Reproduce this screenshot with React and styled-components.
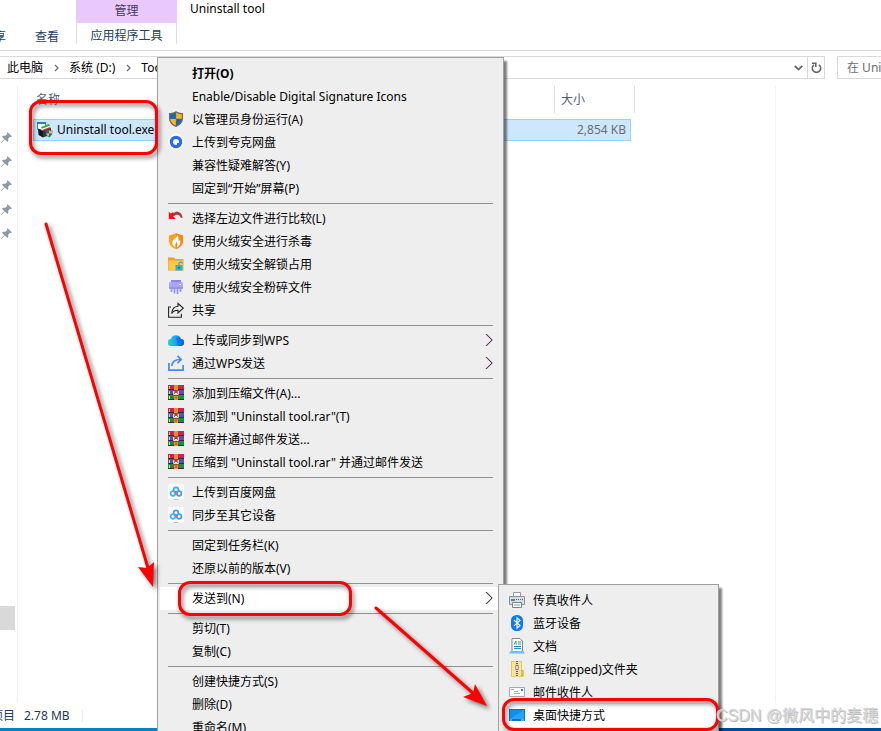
import React from "react";
import styled, { createGlobalStyle, css } from "styled-components";

const GlobalStyle = createGlobalStyle`
  * { box-sizing: border-box; }
  body {
    margin: 0;
    background: #fff;
    overflow: hidden;
  }
  body, button, input, table {
    font-family: "Noto Sans", "Noto Sans CJK SC", sans-serif;
    font-size: 12px;
    line-height: 16px;
    color: #000;
  }
`;

/* ---------- explorer window ---------- */

const Desktop = styled.div`
  position: relative;
  height: 100vh;
  overflow: hidden;
  display: flex;
  flex-direction: column;
`;

const Ribbon = styled.header`
  display: flex;
  flex: none;
  height: 51px;
  border-bottom: 1px solid #dadbdc;
`;

const RibbonTab = styled.button`
  align-self: flex-end;
  height: 26px;
  margin: 0 17px 0 0;
  padding: 0;
  border: 0;
  background: none;
  white-space: nowrap;
  color: #24405f;
`;

const HomeTabs = styled.div`
  display: flex;
  justify-content: flex-end;
  width: 76px;
  overflow: hidden;
  button:first-child { margin-right: 29px; }
`;

const ToolTab = styled.div`
  display: flex;
  flex-direction: column;
  width: 101px;
  height: 44px;
  text-align: center;
`;

const ToolTitle = styled.div`
  height: 24px;
  padding-top: 3px;
  background: #e9c9fd;
  color: #4a3a55;
`;

const ToolButton = styled.button`
  flex: 1;
  padding: 5px 0 0;
  border: 1px solid #dedede;
  border-width: 0 1px;
  background: #fff;
  color: #24405f;
  white-space: nowrap;
`;

const WindowTitle = styled.h1`
  margin: 0;
  padding: 1px 13px;
  font-size: 12px;
  font-weight: 400;
`;

const AddressRow = styled.div`
  display: flex;
  flex: none;
  gap: 12px;
  padding: 5px 0 7px;
`;

const AddressBar = styled.nav`
  display: flex;
  flex: 1;
  align-items: center;
  height: 23px;
  padding-left: 7px;
  border: 1px solid #d9d9d9;
  border-left: 0;
`;

const Crumb = styled.a`
  color: #000;
  text-decoration: none;
  white-space: nowrap;
`;

const CrumbArrow = styled.svg`
  flex: none;
  width: 5px;
  height: 8px;
  margin: 0 10px 0 11px;
`;

const BarButton = styled.button`
  display: flex;
  align-items: center;
  justify-content: center;
  width: 17px;
  height: 21px;
  padding: 0;
  border: 0;
  border-left: ${(p) => (p.$divider ? "1px solid #d9d9d9" : "0")};
  margin-left: ${(p) => (p.$push ? "auto" : "0")};
  background: none;
`;

const Search = styled.input`
  flex: none;
  width: 44px;
  height: 23px;
  padding: 0 0 0 9px;
  border: 1px solid #d9d9d9;
  border-right: 0;
  border-radius: 0;
  outline: 0;
  &::placeholder { color: #6d6d6d; opacity: 1; }
`;

const Content = styled.div`
  display: flex;
  flex: 1;
  min-height: 0;
`;

const NavPane = styled.aside`
  display: flex;
  flex-direction: column;
  width: 18px;
  padding: 40px 0 73px;
  border-right: 1px solid #f0f0f0;
`;

const PinSlot = styled.div`
  display: flex;
  align-items: center;
  height: 24px;
  padding: 0 0 1px 1px;
`;

const ScrollThumb = styled.div`
  width: 15px;
  height: 24px;
  margin-top: auto;
  background: #d9d9d9;
`;

const FilePane = styled.main`
  flex: 1;
  padding-left: 15px;
`;

const PreviewPane = styled.aside`
  width: 106px;
  border-left: 1px solid #f3f3f3;
`;

const FileTable = styled.table`
  border-collapse: separate;
  border-spacing: 0;
  table-layout: fixed;
  width: 602px;
  th, td { padding: 0; font-weight: 400; text-align: left; }
  th { padding-bottom: 6px; color: #4c607a; }
  col:nth-child(1) { width: 522px; }
  col:nth-child(2) { width: 76px; }
`;

const HeadCell = styled.div`
  height: 27px;
  padding: 6px 0 0 ${(p) => p.$indent || 0}px;
  border-right: ${(p) => (p.$line ? "1px solid #e0e0e0" : "0")};
`;

const fileCell = css`
  height: 22px;
  background: #cce8ff;
  border: 1px solid #99d1ff;
`;

const NameCell = styled.td`
  ${fileCell}
  border-right: 0;
  div { display: flex; align-items: center; gap: 4px; padding-left: 3px; }
`;

const SizeCell = styled.td`
  ${fileCell}
  border-left: 0;
  div { padding-right: 4px; text-align: right; color: #6d6d6d; }
`;

const StatusBar = styled.footer`
  display: flex;
  flex: none;
  align-items: center;
  gap: 9px;
  height: 25px;
  color: #1e395b;
  white-space: nowrap;
`;

const StatusCount = styled.span`
  display: flex;
  justify-content: flex-end;
  width: 15px;
  overflow: hidden;
`;

const StatusSize = styled.span`
  padding-right: 12px;
  border-right: 1px solid #ececec;
  line-height: 12px;
`;

const Taskbar = styled.div`
  flex: none;
  height: 3px;
  background: linear-gradient(90deg, #0085c3 20%, #004a9c 80%);
`;

/* ---------- context menus ---------- */

const Menu = styled.div`
  position: absolute;
  left: ${(p) => p.$x}px;
  top: ${(p) => p.$y}px;
  width: ${(p) => p.$w}px;
  padding: 4px 2px;
  background: #eee;
  border: 1px solid #a0a0a0;
  box-shadow: 3px 4px 2px rgba(0, 0, 0, 0.5);
`;

const MenuItem = styled.button`
  display: grid;
  grid-template-columns: 16px 1fr auto;
  align-items: center;
  gap: 8px;
  width: 100%;
  height: 23px;
  padding: 0 8px;
  border: 0;
  background: ${(p) => (p.$active ? "#fff" : "transparent")};
  font-weight: ${(p) => (p.$bold ? 700 : 400)};
  text-align: left;
  white-space: nowrap;
  svg { margin-bottom: 1px; }
`;

const Separator = styled.hr`
  height: 1px;
  margin: 3px 8px;
  border: 0;
  background: #919191;
`;

const Icon16 = styled.svg`
  display: block;
  flex: none;
  width: 16px;
  height: 16px;
`;

/* ---------- marks over the windows ---------- */

const RedBox = styled.div`
  position: absolute;
  left: ${(p) => p.$x}px;
  top: ${(p) => p.$y}px;
  width: ${(p) => p.$w}px;
  height: ${(p) => p.$h}px;
  border: 3px solid #f00;
  border-radius: 12px;
  filter: drop-shadow(2px 3px 2px rgba(0, 0, 0, 0.5));
  pointer-events: none;
`;

const Arrows = styled.svg`
  position: absolute;
  left: 0;
  top: 0;
  filter: drop-shadow(3px 3px 2px rgba(0, 0, 0, 0.5));
  pointer-events: none;
`;

const Watermark = styled.div`
  position: absolute;
  right: 3px;
  bottom: 3px;
  font-family: "Liberation Sans", "Noto Sans CJK SC", sans-serif;
  font-size: 16px;
  line-height: 24px;
  color: #d6d6d6;
  text-shadow: 1px 1px 0 #bdbdbd;
  white-space: nowrap;
`;

/* ---------- icons ---------- */

function Shield() {
  return (
    <Icon16 viewBox="0 0 16 16">
      <path d="M8 0C6 1.500 4 2 1 2V7c0 4.500 2.500 7 7 9 4.500-2 7-4.500 7-9V2C12 2 10 1.500 8 0z" fill="#6b6b62" />
      <path d="M7.800 1.500C6 2.700 4.500 3.200 2.200 3.300v4.400h5.600z" fill="#1369bd" />
      <path d="M8.200 1.500c1.500 1.200 3 1.700 5.600 1.800v4.400H8.200z" fill="#fdb913" />
      <path d="M2.200 8h5.600v6.500C4.500 13 2.500 11 2.200 8z" fill="#fdb913" />
      <path d="M8.200 8h5.600c-.3 3-2.300 5-5.600 6.500z" fill="#1369bd" />
    </Icon16>
  );
}

function Quark() {
  return (
    <Icon16 viewBox="0 0 16 16">
      <circle cx="8" cy="8" r="8" fill="#fff" />
      <circle cx="8" cy="8" r="6.200" fill="#2567ff" />
      <circle cx="8" cy="8" r="3" fill="#fff" />
      <path d="M9 9h2.500v2H9z" fill="#2567ff" />
    </Icon16>
  );
}

function RedUndo() {
  return (
    <Icon16 viewBox="0 0 16 16">
      <path d="M5 3.500C9 0 14 2 14.500 8l-1.700-.3C11.500 4 8.500 4 6 6z" fill="#a63a3a" />
      <path d="M.8 1.800L3 3.500l2-1.300 2 2.300-1.800 2L8 9H.8z" fill="#f01414" />
    </Icon16>
  );
}

function FireShield() {
  return (
    <Icon16 viewBox="0 0 16 16">
      <path d="M8 0C6 1.500 3.500 2 1 2.200V8c0 4 3 6.500 7 8 4-1.500 7-4 7-8V2.200C12.500 2 10 1.500 8 0z" fill="#ffa21a" />
      <path d="M8 0v16c4-1.500 7-4 7-8V2.200C12.500 2 10 1.500 8 0z" fill="#f88a12" />
      <path d="M9 2c.5 2.500-3.500 4-4.500 6.500C3.800 11 5 13 7.500 14.500c-1-2-.3-3.500 1.300-6 .2 2 .8 4 0 6 3-1.500 4.200-4 3.200-8-.4 1-.8 1.400-1.500 1.500C10.700 6 10.500 3.500 9 2z" fill="#fff" />
    </Icon16>
  );
}

function UnlockFolder() {
  return (
    <Icon16 viewBox="0 0 16 16">
      <path d="M0 1.500h6l1.500 1.500H15.500V14.500H0z" fill="#e9a425" />
      <path d="M.5 4.500h14.500v9.500H.5z" fill="#ffc845" />
      <path d="M11 9V7.500c0-1.800 3.500-1.800 3.500 0" fill="none" stroke="#27a9dc" strokeWidth="1.200" />
      <rect x="7.500" y="9" width="7" height="5.500" fill="#2daee0" />
      <path d="M10 11h2v1.500h-2z" fill="#146e9c" />
    </Icon16>
  );
}

function Shredder() {
  return (
    <Icon16 viewBox="0 0 16 16">
      <path d="M3 1h10v4H3z" fill="#8d87ea" />
      <rect x="1" y="3" width="14" height="7" rx="1.500" fill="#aaa5f8" />
      <path d="M3.500 10v3M6.500 10v4.500M9.500 10v5M12.500 10v3" stroke="#9a94f0" strokeWidth="1.800" />
      <path d="M1 9h14" stroke="#8780e5" />
      <path d="M11 5.500h2" stroke="#fff" />
    </Icon16>
  );
}

function Share() {
  return (
    <Icon16 viewBox="0 0 16 16" fill="none" stroke="#222" strokeWidth="1.100">
      <path d="M3 5H.6v10.200h12.800v-3.500" />
      <path d="M10 1.500l5.300 4.700L10 11V8.300c-3 0-5 .9-6.300 3.200C3.900 7.200 6.300 4.500 10 4.200z" />
    </Icon16>
  );
}

function Cloud() {
  return (
    <Icon16 viewBox="0 0 16 16">
      <defs>
        <linearGradient id="cloudFill">
          <stop offset="0" stopColor="#20dcb8" />
          <stop offset=".5" stopColor="#18a2fa" />
          <stop offset="1" stopColor="#0a5ce8" />
        </linearGradient>
      </defs>
      <path d="M3.500 14a3.500 3.500 0 0 1-.6-7A5.300 5.300 0 0 1 13 7a3.500 3.500 0 0 1-.5 7z" fill="url(#cloudFill)" />
      <path d="M8 6c2-1.500 4-1 5 1a3.500 3.500 0 0 1-.5 7H10z" fill="#0966ed" opacity=".6" />
    </Icon16>
  );
}

function WpsSend() {
  return (
    <Icon16 viewBox="0 0 16 16" fill="none" stroke="#3f8cf5" strokeWidth="1.700">
      <path d="M.9 8v7.100h14.200V10" />
      <path d="M3.800 11C4 6.500 7 4.500 12.500 4.500" />
      <path d="M9.500.8l3.700 3.700-3.700 3.700" />
    </Icon16>
  );
}

function Rar() {
  return (
    <Icon16 viewBox="0 0 16 16">
      <path d="M0 0h16v5H0z" fill="#c92352" />
      <path d="M0 5h16v5H0z" fill="#4e56ba" />
      <path d="M0 10h16v5H0z" fill="#169141" />
      <path d="M0 4.500h16M0 9.500h16M0 14.500h16" stroke="#33283f" />
      <path d="M1.500 1v3M1.500 6v3M1.500 11v3" stroke="#f1d43d" />
      <path d="M6 0h4v15H6z" fill="#f28b26" />
      <path d="M5 5h6v6H5z" fill="#a8452c" />
      <path d="M5.800 6v3.500h1.700V8M10.200 6v3.500H8.500V8" stroke="#fff" fill="none" />
      <path d="M7 11h2v3H7z" fill="#e2641c" />
    </Icon16>
  );
}

function Baidu() {
  return (
    <Icon16 viewBox="0 0 16 16">
      <rect width="16" height="16" rx="3" fill="#fff" />
      <g fill="none" strokeWidth="1.700">
        <circle cx="8" cy="5.800" r="2.400" stroke="#35a7fb" />
        <circle cx="4.900" cy="9.500" r="2.300" stroke="#22c0fa" />
        <circle cx="11.100" cy="9.500" r="2.300" stroke="#3d9ff8" />
        <path d="M6.200 7.500l3.200 3.200" stroke="#f35580" />
      </g>
      <path d="M5.500 15.500h5" stroke="#f6a7b8" />
    </Icon16>
  );
}

function Printer() {
  return (
    <Icon16 viewBox="0 0 16 16">
      <path d="M4.500.500h7v5h-7z" fill="#fff" stroke="#929ba1" />
      <path d="M.5 4.500h15v8H.5z" fill="#d9dddf" stroke="#8a9399" />
      <path d="M2 7h4v2H2z" fill="#5b84a8" />
      <path d="M7 7.500h1M9 7.500h1M11 7.500h1M13 7.500h1" stroke="#2f6fb0" />
      <path d="M3.500 10.500h9v5h-9z" fill="#fff" stroke="#79838a" />
      <path d="M5 13h6" stroke="#4ca6dc" />
    </Icon16>
  );
}

function BluetoothIcon() {
  return (
    <Icon16 viewBox="0 0 16 16">
      <rect x="2" y="0" width="12" height="16" rx="5.500" fill="#0a7cf0" />
      <path d="M5 5.200l6 5.400L8 13.200V2.800l3 2.600-6 5.400" fill="none" stroke="#fff" strokeWidth="1.100" />
    </Icon16>
  );
}

function DocIcon() {
  return (
    <Icon16 viewBox="0 0 16 16">
      <path d="M3 .5h8l2.500 2.500v11H3z" fill="#fff" stroke="#7f8a91" />
      <path d="M5 6.500L7 3v3.500M9 4h3M9 6h3M5 8.500h7M5 10.500h7" stroke="#2690ce" fill="none" />
      <path d="M1.500 13h13L16 15.500H0z" fill="#6fc3e9" />
    </Icon16>
  );
}

function ZipFolder() {
  return (
    <Icon16 viewBox="0 0 16 16">
      <path d="M2 0h11v9h1.500v7H2z" fill="#e8c65d" />
      <path d="M3 1h9v14H3z" fill="#ffe495" />
      <path d="M6 0h4v16H6z" fill="#e3d9b0" />
      <path d="M8 0v16" stroke="#6a6758" strokeWidth="2" strokeDasharray="1 1" />
      <path d="M6.800 4.500h2.400v4H6.800z" fill="#f4f4f1" stroke="#6d695d" strokeWidth=".7" />
      <path d="M12 9.500h2v5h-2" fill="none" stroke="#d8a92f" />
    </Icon16>
  );
}

function MailIcon() {
  return (
    <Icon16 viewBox="0 0 16 16">
      <path d="M.5 3.500h15v9H.5z" fill="#f9fafb" stroke="#a3abb0" />
      <path d="M12 5h2v2h-2z" fill="#278bd4" />
      <path d="M2 5.500h3M5 9.500h6M5 7.500h4" stroke="#aaa" />
    </Icon16>
  );
}

function DesktopIcon() {
  return (
    <Icon16 viewBox="0 0 16 16">
      <path d="M0 2h16v12H0z" fill="#0874cc" />
      <path d="M1 3h14v9H1z" fill="#0e91ec" />
      <path d="M1 12L15 3v9z" fill="#27a4f5" />
      <path d="M1 13h2M12 13h3" stroke="#b9e1ff" />
    </Icon16>
  );
}

function ToolAppIcon() {
  return (
    <Icon16 viewBox="0 0 16 16">
      <path d="M.5.500h8v7h-8z" fill="#fff" stroke="#3d92c8" />
      <path d="M0 0h9v2H0z" fill="#2582bb" />
      <path d="M4 5l8-3 1 2-8 3z" fill="#41a43c" />
      <path d="M4 7l8.500-3 1 2L5 9z" fill="#fff" />
      <path d="M5 8l8-3 1 1.500L6 9.500z" fill="#d93030" />
      <path d="M1 6.500l5 2.500v6.500L1.500 13z" fill="#171717" />
      <path d="M6 9l8-3v6.500l-8 3z" fill="#353535" />
      <path d="M12 7.500c1 .6 2 .9 3.500 1 0 3.500-.8 5.700-3.500 7-2.700-1.300-3.500-3.500-3.500-7 1.500-.1 2.500-.4 3.500-1z" fill="#1d68b8" />
      <path d="M12 8.500v3h3c.3-1 .3-1.800.3-2.500zM12 11.500v3.200c-1.800-1-2.600-2-2.800-3.200z" fill="#f9b51d" />
    </Icon16>
  );
}

function Pin() {
  return (
    <svg width="11" height="11" viewBox="0 0 11 11">
      <path d="M6.500 0L11 4.500l-1.300.5-.7-.2-1.800 1.800.1 2.400-1 1L4 7.500.5 10.800 0 10.500 3.300 7 1 4.700l1-1 2.500.1L6.200 2 6 1.200z" fill="#8d9aa3" />
    </svg>
  );
}

function SubArrow() {
  return (
    <svg width="8" height="14" viewBox="0 0 8 14" fill="none">
      <path d="M.5 1l6 6-6 6" stroke="#e0a080" />
      <path d="M1.500 1l6 6-6 6" stroke="#5aa0e0" />
      <path d="M1 1l6 6-6 6" stroke="#4a2030" strokeWidth=".8" />
    </svg>
  );
}

function Chevron() {
  return (
    <CrumbArrow viewBox="0 0 5 8" fill="none" stroke="#6d6d6d" strokeWidth="1.300">
      <path d="M1 1l3 3-3 3" />
    </CrumbArrow>
  );
}

/* ---------- data ---------- */

const menuGroups = [
  [
    { text: "打开(O)", bold: true },
    { text: "Enable/Disable Digital Signature Icons" },
    { text: "以管理员身份运行(A)", icon: Shield },
    { text: "上传到夸克网盘", icon: Quark },
    { text: "兼容性疑难解答(Y)" },
    { text: "固定到“开始”屏幕(P)" },
  ],
  [
    { text: "选择左边文件进行比较(L)", icon: RedUndo },
    { text: "使用火绒安全进行杀毒", icon: FireShield },
    { text: "使用火绒安全解锁占用", icon: UnlockFolder },
    { text: "使用火绒安全粉碎文件", icon: Shredder },
    { text: "共享", icon: Share },
  ],
  [
    { text: "上传或同步到WPS", icon: Cloud, sub: true },
    { text: "通过WPS发送", icon: WpsSend, sub: true },
  ],
  [
    { text: "添加到压缩文件(A)...", icon: Rar },
    { text: "添加到 \"Uninstall tool.rar\"(T)", icon: Rar },
    { text: "压缩并通过邮件发送...", icon: Rar },
    { text: "压缩到 \"Uninstall tool.rar\" 并通过邮件发送", icon: Rar },
  ],
  [
    { text: "上传到百度网盘", icon: Baidu },
    { text: "同步至其它设备", icon: Baidu },
  ],
  [{ text: "固定到任务栏(K)" }, { text: "还原以前的版本(V)" }],
  [{ text: "发送到(N)", sub: true, active: true }],
  [{ text: "剪切(T)" }, { text: "复制(C)" }],
  [{ text: "创建快捷方式(S)" }, { text: "删除(D)" }, { text: "重命名(M)" }],
];

const sendToGroups = [
  [
    { text: "传真收件人", icon: Printer },
    { text: "蓝牙设备", icon: BluetoothIcon },
    { text: "文档", icon: DocIcon },
    { text: "压缩(zipped)文件夹", icon: ZipFolder },
    { text: "邮件收件人", icon: MailIcon },
    { text: "桌面快捷方式", icon: DesktopIcon, active: true },
  ],
];

function ContextMenu({ groups, x, y, w }) {
  return (
    <Menu role="menu" $x={x} $y={y} $w={w}>
      {groups.map((group, g) => (
        <React.Fragment key={g}>
          {g > 0 && <Separator />}
          {group.map(({ text, icon: Icon, bold, sub, active }) => (
            <MenuItem key={text} role="menuitem" $bold={bold} $active={active}>
              {Icon ? <Icon /> : <i />}
              <span>{text}</span>
              {sub && <SubArrow />}
            </MenuItem>
          ))}
        </React.Fragment>
      ))}
    </Menu>
  );
}

function App() {
  return (
    <Desktop>
      <GlobalStyle />
      <Ribbon>
        <HomeTabs>
          <RibbonTab>共享</RibbonTab>
          <RibbonTab>查看</RibbonTab>
        </HomeTabs>
        <ToolTab>
          <ToolTitle>管理</ToolTitle>
          <ToolButton>应用程序工具</ToolButton>
        </ToolTab>
        <WindowTitle>Uninstall tool</WindowTitle>
      </Ribbon>

      <AddressRow>
        <AddressBar>
          <Crumb href="#pc">此电脑</Crumb>
          <Chevron />
          <Crumb href="#d">系统 (D:)</Crumb>
          <Chevron />
          <Crumb href="#tools">Tools</Crumb>
          <BarButton $push aria-label="历史记录">
            <svg width="9" height="6" viewBox="0 0 9 6" fill="none" stroke="#666" strokeWidth="1.800">
              <path d="M.7.800l3.800 3.800L8.300.8" />
            </svg>
          </BarButton>
          <BarButton $divider aria-label="刷新">
            <svg width="11" height="12" viewBox="0 0 11 12" fill="none" stroke="#666" strokeWidth="1.600">
              <path d="M8 2.800A4.200 4.200 0 1 1 3 2.800" />
              <path d="M1 1.200h3.800V5" />
            </svg>
          </BarButton>
        </AddressBar>
        <Search type="text" aria-label="搜索" placeholder="在 Uninstall tool 中搜索" />
      </AddressRow>

      <Content>
        <NavPane>
          {[0, 1, 2, 3, 4].map((n) => (
            <PinSlot key={n}><Pin /></PinSlot>
          ))}
          <ScrollThumb />
        </NavPane>
        <FilePane>
          <FileTable>
            <colgroup><col /><col /><col /></colgroup>
            <thead>
              <tr>
                <th><HeadCell $indent={3} $line>名称</HeadCell></th>
                <th><HeadCell $indent={6}>大小</HeadCell></th>
                <th><HeadCell $line /></th>
              </tr>
            </thead>
            <tbody>
              <tr>
                <NameCell><div><ToolAppIcon />Uninstall tool.exe</div></NameCell>
                <SizeCell><div>2,854 KB</div></SizeCell>
                <td />
              </tr>
            </tbody>
          </FileTable>
        </FilePane>
        <PreviewPane />
      </Content>

      <StatusBar>
        <StatusCount>1 个项目</StatusCount>
        <StatusSize>2.78 MB</StatusSize>
      </StatusBar>
      <Taskbar />

      <ContextMenu groups={menuGroups} x={157} y={57} w={347} />
      <ContextMenu groups={sendToGroups} x={498} y={584} w={221} />

      <RedBox $x={29} $y={100} $w={129} $h={55} />
      <RedBox $x={178} $y={581} $w={174} $h={35} />
      <RedBox $x={502} $y={698} $w={217} $h={33} />
      <Arrows width="500" height="720" viewBox="0 0 500 720" fill="#f00" stroke="#f00">
        <path d="M46 224L148 568M376 608L474 694" strokeWidth="3" strokeLinecap="round" />
        <path d="M153 587L138 567l9 1 7-6z" stroke="none" />
        <path d="M487 706L463 697l10-4 2-9z" stroke="none" />
      </Arrows>
      <Watermark>CSDN @微风中的麦穗</Watermark>
    </Desktop>
  );
}

export default App;
